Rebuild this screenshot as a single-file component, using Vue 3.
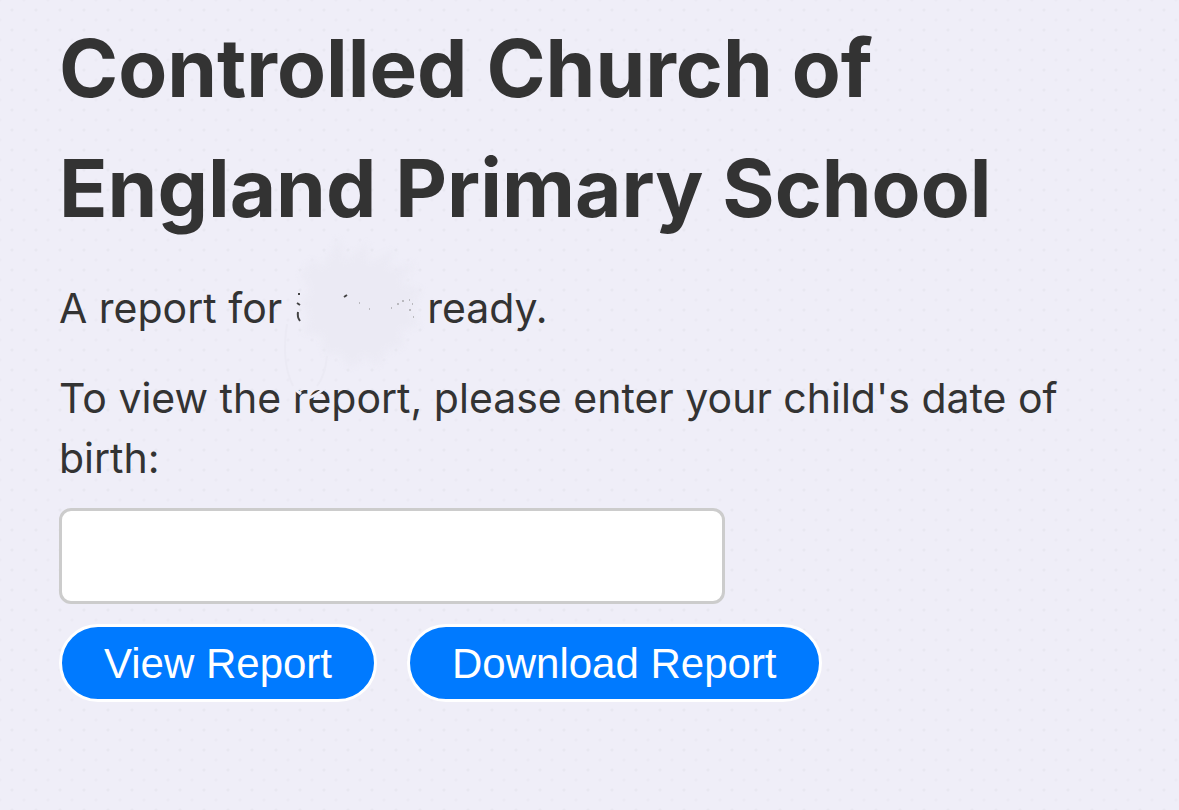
<script setup>
import { ref } from 'vue'
const birthDate = ref('')
</script>

<template>
  <main class="page">
    <h1>Controlled Church of<br />England Primary School</h1>
    <p class="notice">
      <span>A report for</span>
      <svg class="smudge" viewBox="0 0 160 190" aria-hidden="true">
        <defs>
          <filter id="feather" x="-10%" y="-10%" width="120%" height="120%" color-interpolation-filters="sRGB">
            <feGaussianBlur stdDeviation="3" />
          </filter>
        </defs>
        <path class="cloud" filter="url(#feather)" d="M22 58 34 44 44 50 60 22 66 44 88 28 90 46 114 34 110 52 136 48 122 66 142 74 132 92 140 110 122 114 124 130 108 134 98 150 86 140 72 152 60 138 46 138 42 120 24 116 30 100 22 88 30 74Z" />
        <path class="wisp" d="M8 108Q2 146 14 170M48 140Q46 160 38 170" />
        <path class="cut" d="M13 171 22 178M27 183Q37 180 47 171" />
        <path class="specks" d="M20 77v2M18 87l3 2M19 96q-1 5 2 9M65 81l3-2" />
        <path class="dust" d="M80 87h1M90 93h1M112 92h1M118 88h2M123 85h2M130 84h1M133 88h1M130 94h2M134 101h1" />
      </svg>
      <span>ready.</span>
    </p>
    <form @submit.prevent>
      <label for="birth-date">To view the report, please enter your child's date of birth:</label>
      <input id="birth-date" v-model="birthDate" type="text" />
      <div class="actions">
        <button type="submit">View Report</button>
        <button type="button">Download Report</button>
      </div>
    </form>
  </main>
</template>

<style>
body {
  background: #efeef8;
}
</style>

<style scoped>
.page {
  box-sizing: border-box;
  min-height: 100vh;
  padding: 8px 59px;
  color: #333;
  font: 41px/60px Inter, "Liberation Sans", sans-serif;
  background:
    radial-gradient(circle, #e8e8f1 1px, transparent 2px) 0 0 / 24px 20px,
    radial-gradient(circle, #ebeaf4 1px, transparent 2px) 12px 10px / 24px 20px,
    #efeef8;
}
h1 {
  margin: 0;
  font-size: 80px;
  line-height: 120px;
  font-weight: 700;
}
.notice {
  display: flex;
  gap: 145px;
  position: relative;
  margin: 30px 0;
}
.smudge {
  position: absolute;
  z-index: 1;
  left: 220px;
  top: -62px;
  width: 160px;
  pointer-events: none;
}
.cloud { fill: #ebeaf4; }
.wisp { fill: none; stroke: #ebeaf4; stroke-width: 2; }
.cut { fill: none; stroke: #efeef8; stroke-width: 3; }
.specks { fill: none; stroke: #444; stroke-width: 2; }
.dust { fill: none; stroke: #888; stroke-width: 1; }
label { display: block; }
input {
  display: block;
  box-sizing: border-box;
  width: 100%;
  max-width: 666px;
  height: 96px;
  margin: 20px 0;
  padding: 0 20px;
  border: 3px solid #ccc;
  border-radius: 12px;
  background: #fff;
  color: inherit;
  font: inherit;
}
.actions {
  display: flex;
  flex-wrap: wrap;
  gap: 30px;
}
button {
  padding: 2px 42px 0;
  border: 3px solid #fff;
  border-radius: 40px;
  background: #007aff;
  color: #fff;
  font: 42px/70px "Liberation Sans", Arial, sans-serif;
}
</style>
